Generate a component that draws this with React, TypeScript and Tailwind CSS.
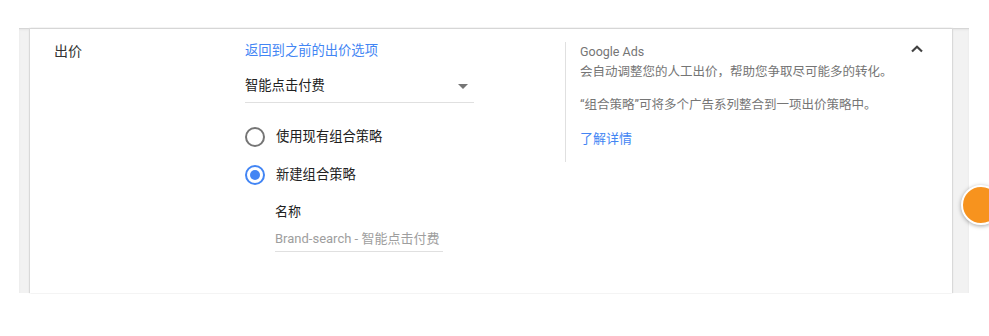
import * as React from 'react'

const font = { fontFamily: 'Roboto, "Noto Sans CJK SC", sans-serif' }

function Radio({ checked }: { checked: boolean }) {
  return checked ? (
    <span className="flex h-[20px] w-[20px] items-center justify-center rounded-full border-2 border-[#4285f4]">
      <span className="h-[10px] w-[10px] rounded-full bg-[#4285f4]" />
    </span>
  ) : (
    <span className="h-[20px] w-[20px] rounded-full border-2 border-[#757575]" />
  )
}

export default function App() {
  return (
    <div className="relative h-[336px] w-[989px] overflow-hidden bg-white" style={font}>
      <div className="px-[19px] pt-[28px] pr-[20px]">
        <div className="flex h-[265px] bg-[#f2f2f2] pl-[11px] pr-[17px] shadow-[inset_0_1px_0_#d6d6d6,inset_0_2px_2px_#e4e4e4]">
          <div className="flex flex-1 bg-white pt-[14px] shadow-[-1px_0_1px_#d9d9d9,1px_0_1px_#d9d9d9,inset_0_1px_0_#d6d6d6]">
            <div className="w-[215px] pl-[24px] text-[14px] leading-[18px] text-[#333]">出价</div>

            <div className="w-[320px]">
              <div className="text-[13.3px] leading-[18px] text-[#4285f4]">返回到之前的出价选项</div>
              <div className="mt-[16px] flex w-[229px] items-center justify-between border-b border-[#e0e0e0] pb-[6px]">
                <span className="text-[13.3px] leading-[20px] text-[#212121]">智能点击付费</span>
                <span className="mr-[6px] h-0 w-0 border-x-[5px] border-t-[5px] border-x-transparent border-t-[#757575]" />
              </div>
              <div className="mt-[24px] flex items-center gap-[11px]">
                <Radio checked={false} />
                <span className="text-[13.3px] leading-[20px] text-[#212121]">使用现有组合策略</span>
              </div>
              <div className="mt-[18px] flex items-center gap-[11px]">
                <Radio checked />
                <span className="text-[13.3px] leading-[20px] text-[#212121]">新建组合策略</span>
              </div>
              <div className="ml-[30px] mt-[18px] text-[13px] leading-[18px] text-[#212121]">名称</div>
              <div className="ml-[30px] mt-[9px] w-[168px] border-b border-[#e0e0e0] pb-[3px] text-[13px] leading-[18px] text-[#9e9e9e]">
                Brand-search - 智能点击付费
              </div>
            </div>

            <div className="flex h-[120px] flex-1 border-l border-[#e0e0e0] pl-[14px]">
              <div className="flex-1 pt-[2px] text-[12.5px] text-[#757575]">
                <div className="leading-[16px]">Google Ads</div>
                <div className="mt-[4px] leading-[16px]">会自动调整您的人工出价，帮助您争取尽可能多的转化。</div>
                <div className="mt-[17px] leading-[16px]">“组合策略”可将多个广告系列整合到一项出价策略中。</div>
                <div className="mt-[18px] text-[13px] leading-[16px] text-[#4285f4]">了解详情</div>
              </div>
              <div className="mr-[29px] mt-[3px]">
                <svg width="12" height="8" viewBox="0 0 12 8">
                  <path d="M1 6.5 6 1.8l5 4.7" fill="none" stroke="#424242" strokeWidth="2.2" />
                </svg>
              </div>
            </div>
          </div>
        </div>
      </div>
      <div className="absolute left-[961px] top-[185px] h-[40px] w-[40px] rounded-full border-2 border-white bg-[#f7931e] shadow-[0_1px_4px_rgba(0,0,0,0.35)]" />
    </div>
  )
}
